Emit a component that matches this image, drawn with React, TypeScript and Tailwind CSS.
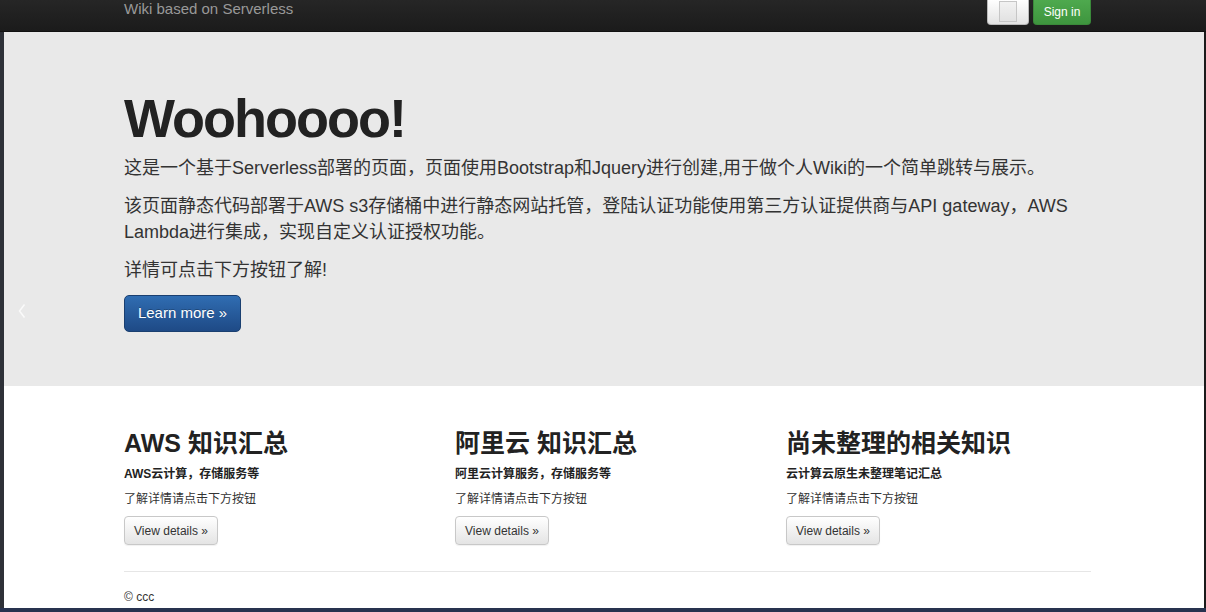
export default function App() {
  const cols = [
    { title: "AWS 知识汇总", sub: "AWS云计算，存储服务等" },
    { title: "阿里云 知识汇总", sub: "阿里云计算服务，存储服务等" },
    { title: "尚未整理的相关知识", sub: "云计算云原生未整理笔记汇总" },
  ];

  return (
    <div className="flex h-[612px] w-[1206px] flex-col overflow-hidden bg-[#2e3138] font-['Liberation_Sans','Noto_Sans_CJK_SC',sans-serif]">
      {/* top bar */}
      <nav className="h-[32px] shrink-0 border-b border-[#111] bg-gradient-to-b from-[#262626] to-[#1b1b1b]">
        <div className="ml-[124px] flex w-[967px] items-start justify-between">
          <span className="text-[15px] leading-[18px] text-[#999]">Wiki based on Serverless</span>
          <div className="flex gap-[4px]">
            <button
              type="button"
              className="flex h-[25px] w-[42px] items-start justify-center rounded-b-[4px] border border-t-0 border-[#bbb] bg-gradient-to-b from-[#fff] to-[#e3e3e3] pt-[1px]"
            >
              <span className="block h-[21px] w-[18px] border border-[#c6c6c6] bg-gradient-to-b from-[#f2f2f2] to-[#e2e2e2]" />
            </button>
            <button
              type="button"
              className="h-[25px] w-[58px] rounded-b-[4px] border border-t-0 border-[#3a8a3a] bg-gradient-to-b from-[#4ea94e] to-[#3e953e] text-[12px] text-white"
            >
              Sign in
            </button>
          </div>
        </div>
      </nav>

      <div className="flex min-h-0 flex-1">
        <div className="w-[4px] bg-[#2e3138]" />
        <main className="flex w-[1200px] flex-col bg-white">
          {/* hero */}
          <section className="relative bg-[#e9e9e9] pb-[54px] pt-[59px]">
            <svg
              className="absolute left-[14px] top-[271px]"
              width="8"
              height="16"
              viewBox="0 0 8 16"
              fill="none"
            >
              <path d="M6.5 1.5 1.5 8l5 6.5" stroke="#fafafa" strokeWidth="1.5" />
            </svg>
            <div className="ml-[120px] w-[967px]">
              <h1 className="mb-[10px] text-[54px] font-bold leading-[54px] tracking-[-2px] text-[#222]">
                Woohoooo!
              </h1>
              <p className="mb-[12px] text-[18px] leading-[26px] text-[#333]">
                这是一个基于Serverless部署的页面，页面使用Bootstrap和Jquery进行创建,用于做个人Wiki的一个简单跳转与展示。
              </p>
              <p className="mb-[12px] text-[18px] leading-[26px] text-[#333]">
                该页面静态代码部署于AWS s3存储桶中进行静态网站托管，登陆认证功能使用第三方认证提供商与API gateway，AWS Lambda进行集成，实现自定义认证授权功能。
              </p>
              <p className="mb-[12px] text-[18px] leading-[26px] text-[#333]">详情可点击下方按钮了解!</p>
              <button
                type="button"
                className="h-[37px] w-[117px] rounded-[5px] border border-[#1a3f70] bg-gradient-to-b from-[#306db2] to-[#1e4a86] text-[15px] text-white [text-shadow:0_-1px_0_rgba(0,0,0,0.25)]"
              >
                Learn more »
              </button>
            </div>
          </section>

          {/* columns */}
          <section className="ml-[120px] w-[967px] pt-[42px]">
            <div className="grid grid-cols-3 gap-x-[26px]">
              {cols.map((c) => (
                <div key={c.title}>
                  <h2 className="text-[25px] font-semibold leading-[30px] text-[#222]">{c.title}</h2>
                  <p className="mt-[7px] text-[12px] font-bold leading-[18px] text-[#222]">{c.sub}</p>
                  <p className="mt-[7px] text-[12px] leading-[18px] text-[#333]">了解详情请点击下方按钮</p>
                  <button
                    type="button"
                    className="mt-[8px] h-[29px] w-[94px] rounded-[4px] border border-[#c8c8c8] bg-gradient-to-b from-[#fff] to-[#e4e4e4] text-[12px] text-[#333] shadow-[0_1px_1px_rgba(0,0,0,0.06)]"
                  >
                    View details »
                  </button>
                </div>
              ))}
            </div>
            <hr className="mt-[26px] border-t border-[#e6e6e6]" />
            <footer className="mt-[16px] text-[12px] leading-[18px] text-[#333]">© ccc</footer>
          </section>
        </main>
        <div className="w-[2px] bg-[#1b1b1b]" />
      </div>
      <div className="h-[4px] shrink-0 bg-[#28324f]" />
    </div>
  );
}
